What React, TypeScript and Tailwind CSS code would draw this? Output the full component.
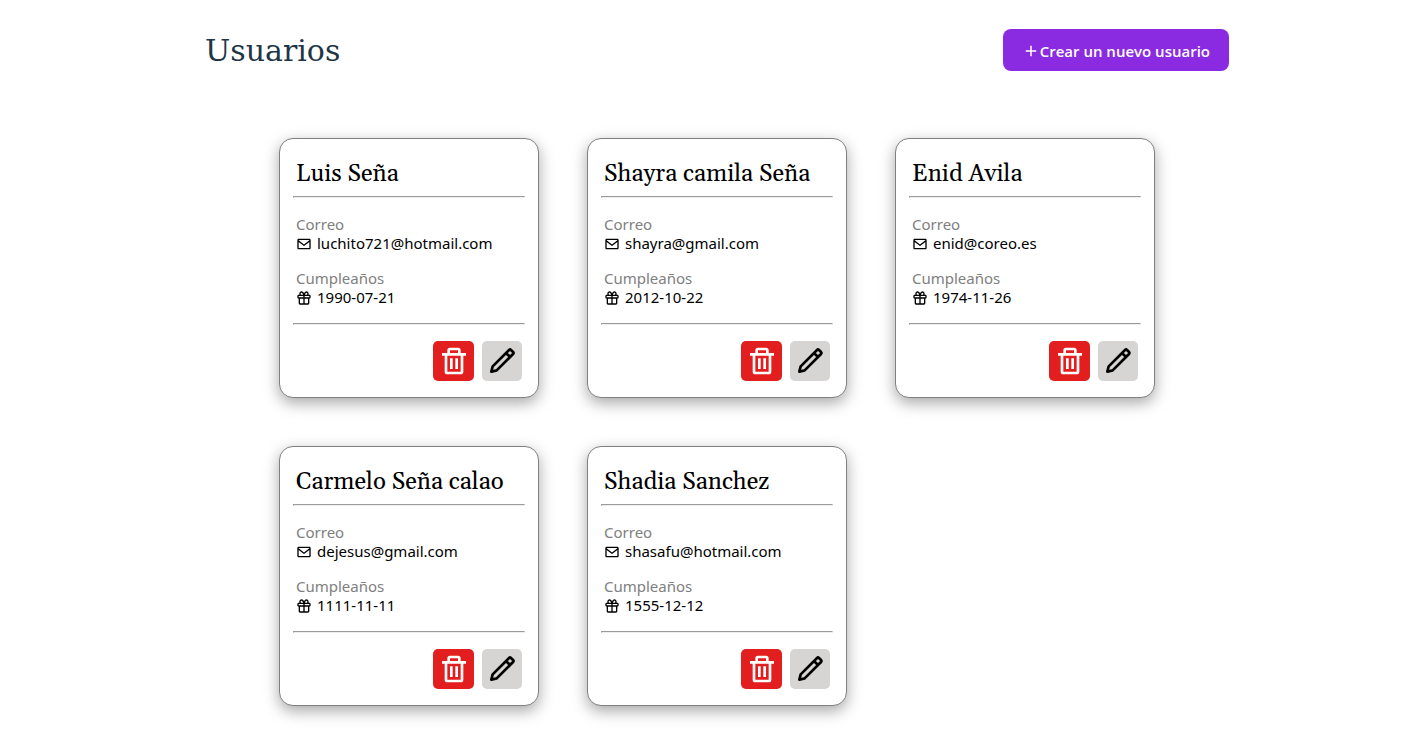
import { BiEnvelope, BiGift, BiPencil, BiPlus, BiTrash } from "react-icons/bi";

type User = { name: string; email: string; birthday: string };

const users: User[] = [
  { name: "Luis Seña", email: "luchito721@hotmail.com", birthday: "1990-07-21" },
  { name: "Shayra camila Seña", email: "shayra@gmail.com", birthday: "2012-10-22" },
  { name: "Enid Avila", email: "enid@coreo.es", birthday: "1974-11-26" },
  { name: "Carmelo Seña calao", email: "dejesus@gmail.com", birthday: "1111-11-11" },
  { name: "Shadia Sanchez", email: "shasafu@hotmail.com", birthday: "1555-12-12" },
];

function Divider() {
  return <hr className="border border-t-[#9a9a9a] border-r-[#eeeeee] border-b-[#eeeeee] border-l-[#9a9a9a]" />;
}

function UserCard({ user }: { user: User }) {
  return (
    <article className="rounded-[14px] border border-[#808080] bg-white px-[13px] pt-4 pb-4 shadow-[0_5px_15px_rgba(0,0,0,0.35)]">
      <h2 className="mb-1 px-[3px] pt-px font-['Gelasio','Liberation_Serif',serif] text-[24px] leading-9 whitespace-nowrap text-black">
        {user.name}
      </h2>
      <Divider />
      <dl className="mt-[17px] mb-4 px-[3px] leading-[19px]">
        <dt className="text-[#808080]">Correo</dt>
        <dd className="flex items-center gap-[5px] text-black">
          <BiEnvelope className="size-4" aria-hidden="true" />
          {user.email}
        </dd>
        <dt className="mt-4 text-[#808080]">Cumpleaños</dt>
        <dd className="flex items-center gap-[5px] text-black">
          <BiGift className="size-4" aria-hidden="true" />
          {user.birthday}
        </dd>
      </dl>
      <Divider />
      <div className="mt-4 flex justify-end gap-2 px-[3px]">
        <button type="button" aria-label="Eliminar" className="flex h-10 w-[41px] items-center justify-center rounded-[5px] bg-[#e31e1e] text-white">
          <BiTrash className="size-8" />
        </button>
        <button type="button" aria-label="Editar" className="flex size-10 items-center justify-center rounded-[5px] bg-[#d6d5d3] text-black">
          <BiPencil className="size-8" />
        </button>
      </div>
    </article>
  );
}

export default function App() {
  return (
    <div className="bg-white pl-[19px] font-['Noto_Sans',sans-serif] text-[15px]">
      <div className="mx-auto max-w-[1024px] pt-[29px] pb-7">
        <header className="flex items-center justify-between">
          <h1 className="pt-0.5 font-['DejaVu_Serif',serif] text-[30px] leading-10 text-[#213547]">Usuarios</h1>
          <button type="button" className="flex h-[42px] items-center justify-center rounded-[8px] bg-[#8a2be2] px-[19px] pt-0.5 font-['Open_Sans',sans-serif] font-semibold text-white">
            <BiPlus className="size-[18px] self-start mt-[11px]" aria-hidden="true" />
            Crear un nuevo usuario
          </button>
        </header>
        <main className="mt-[67px] grid grid-cols-[repeat(auto-fit,260px)] justify-center gap-12 px-12">
          {users.map((user) => (
            <UserCard key={user.email} user={user} />
          ))}
        </main>
      </div>
    </div>
  );
}
